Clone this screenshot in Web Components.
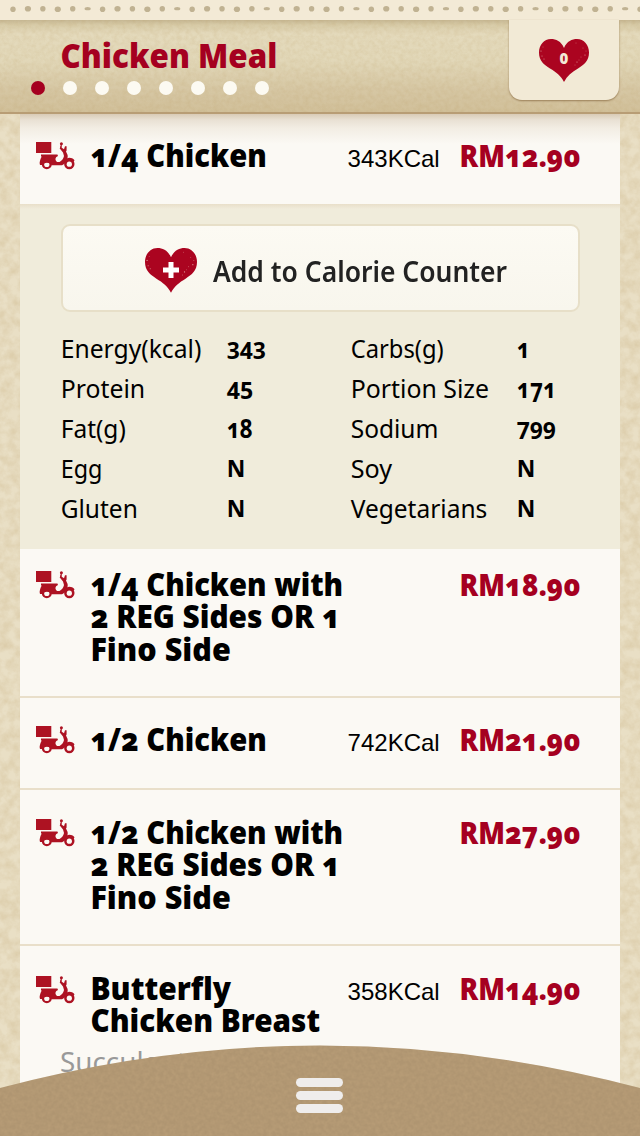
<!DOCTYPE html>
<html lang="en"><head><meta charset="utf-8"><title>Chicken Meal</title>
<style>
html,body{margin:0;height:100%;overflow:hidden}
body{font-family:"Noto Sans","Open Sans",sans-serif;font-variant-numeric:oldstyle-nums}
</style></head><body>
<meal-app></meal-app>
<script>
const define=(name,html,ready)=>customElements.define(name,class extends HTMLElement{
  connectedCallback(){
    if(this.shadowRoot)return;
    const root=this.attachShadow({mode:'open'});
    root.innerHTML=typeof html==='function'?html(this):html;
    if(ready)ready(this,root);
  }
});

/* One line of text, condensed or widened to the width of its box. */
define('fit-line',el=>`<style>
:host{display:block;width:${el.getAttribute('w')}px;white-space:nowrap}
span{display:inline-block;transform-origin:0 50%}
</style><span>${el.getAttribute('text')}</span>`,(el,root)=>{
  const s=root.querySelector('span');
  s.style.transform=`translateX(${el.getAttribute('dx')||-1}px) scaleX(${el.getAttribute('w')/s.offsetWidth})`;
});

define('paper-grain',el=>{
  const a=el.getAttribute('amount')||.9;
  const c=el.hasAttribute('light')?['.82','.7','.53']:['.7','.57','.33'];
  return `<style>
:host{display:block;position:absolute;inset:0;pointer-events:none;overflow:hidden}
svg{display:block;width:100%;height:100%}
</style><svg><filter id="g" x="0" y="0" width="100%" height="100%" color-interpolation-filters="sRGB">
<feTurbulence type="fractalNoise" baseFrequency="${el.getAttribute('freq')||'.12'}" numOctaves="4" seed="7"/>
<feColorMatrix values="0 0 0 0 ${c[0]} 0 0 0 0 ${c[1]} 0 0 0 0 ${c[2]} ${a} 0 0 0 ${-a*.3}"/>
</filter><rect width="100%" height="100%" filter="url(#g)"/></svg>`});

define('heart-icon',`<style>
:host{display:grid;width:50px;height:43px;place-items:center}
svg,.mark{grid-area:1/1}
svg{width:100%;height:100%;overflow:visible}
</style><svg viewBox="0 0 50 43" preserveAspectRatio="none">
<path fill="#ab0420" d="M25 9C22 2 17 0 12 0C5 0 0 6 0 13.500C0 22 5 25.500 11 29.500C17 33 22 37 25 43C28 37 33 33 39 29.500C45 25.500 50 22 50 13.500C50 6 45 0 38 0C33 0 28 2 25 9Z"/>
<g fill="#f3d8c9" opacity=".7"><circle cx="2" cy="12" r=".6"/><circle cx="3" cy="17" r=".5"/><circle cx="5" cy="20" r=".5"/><circle cx="4" cy="8" r=".4"/><circle cx="44" cy="9" r=".4"/><circle cx="46" cy="16" r=".6"/><circle cx="38" cy="23" r=".6"/><circle cx="40" cy="21" r=".4"/><circle cx="36" cy="26" r=".4"/><circle cx="42" cy="18" r=".4"/><circle cx="37" cy="4" r=".4"/><circle cx="47" cy="12" r=".4"/></g>
</svg><span class="mark"><slot></slot></span>`);

define('scooter-icon',`<style>:host{display:block;width:39px;height:28px}svg{display:block}</style>
<svg width="39" height="28" viewBox="0 0 39 28"><g fill="#ad1222">
<circle cx="10.800" cy="22.300" r="5"/><circle cx="33.300" cy="22" r="5.200"/></g>
<g fill="#fbf9f4"><circle cx="10.800" cy="22.500" r="2.600"/><circle cx="33.300" cy="22.200" r="2.600"/></g>
<g fill="#ad1222"><path d="M0 0H15.300V11H0Z"/>
<path d="M5 12.500H20.500C22.600 12.500 22.200 14.600 20.300 15C19 16.500 19.200 18.500 21 20H23.500C26 18.500 27.500 16.500 28 14L27 10.500L23.600 6.200L25 5.200L28 7.200L29 4.200H30.600V8.500L30 9.500L31.600 13C32.500 17 28.500 22.800 26 23.200H15.500C14 20 8 20 6.800 23H4L3.600 21C4 18 4.800 16 5.800 14.500H5Z"/>
<circle cx="25.400" cy="1.700" r="1.500"/><path d="M24.300 3.500L26 3L25.500 6L24 6Z"/>
<path d="M28 19.500C30 15.500 35 14.300 38.500 18.200L37.500 20C35 17.500 31.500 18 29 21.500Z"/></g></svg>`);

define('page-dots',`<style>
:host{display:flex;gap:18px;padding-left:31px}
i{width:14px;height:14px;border-radius:50%;background:#fcfaf2}
i:first-of-type{background:#a50020}
</style>`+'<i></i>'.repeat(8));

define('calorie-tab',`<style>
:host{position:absolute;right:21px;top:20px;width:110px;height:80px;box-sizing:border-box;padding-top:19px;display:flex;justify-content:center;background:#f2ead6;border-radius:0 0 13px 13px;box-shadow:0 1px 2px #9a7f57}
b{display:block;color:#f3ead6;font:900 15px/15px "Noto Sans",sans-serif;font-variant-numeric:lining-nums;position:relative;top:-2px}
</style><heart-icon><b>0</b></heart-icon>`);

define('meal-header',`<style>
:host{display:block;height:114px;position:relative;z-index:2;box-sizing:border-box;border-bottom:2px solid #b89d75;background:linear-gradient(#c6b793 20px,#d8cca9 25px,#e4dabc 34px,#e2d8b9 60px,#d6c7a4 90px,#d1c09a 112px)}
.strip{height:20px;background:#f3ead6;position:relative}
.strip svg{display:block;position:relative}
.body{position:relative}
fit-line{padding:12px 0 0 61px;color:#a50020;font-weight:900;font-size:33.500px;line-height:46px}
page-dots{margin-top:3px}
</style><paper-grain freq=".22" amount=".25"></paper-grain>
<div class="strip"><svg width="640" height="20" fill="#c0b292"></svg></div>
<div class="body"><fit-line dx="-.5" w="217" text="Chicken Meal"></fit-line><page-dots></page-dots></div>
<calorie-tab></calorie-tab>`,(el,root)=>{
  let s='';
  for(let i=0;i<43;i++)s+=`<ellipse cx="${13+i*14.93}" cy="${i%3?8.700:9.200}" rx="${2.700+i%2*.4}" ry="${i%6===5?1.600:2.800}"/>`;
  root.querySelector('svg').innerHTML=s;
});

define('meal-row',el=>`<style>
:host{display:grid;grid-template-columns:55px 1fr auto;box-sizing:border-box;height:${el.getAttribute('h')}px;padding:${el.getAttribute('top')||24.7}px 40px 0 16px;border-bottom:${el.hasAttribute('plain')?0:2}px solid #e9dfca;position:relative;align-items:start}
scooter-icon{margin-top:3.800px}
.name{font-weight:900;font-size:31px;line-height:32.400px;color:#000}
.right{display:flex;align-items:flex-start}
.cal{font:24px/32px "Liberation Sans",sans-serif;font-variant-numeric:normal;padding-top:4px;color:#000;margin-right:20px}
.price{font-weight:900;font-size:29.500px;line-height:32.400px;color:#a50020;padding-top:1.200px}
</style><scooter-icon></scooter-icon><div class="name">${el.getAttribute('lines').split('|').map(l=>{const [t,w]=l.split('~');return `<fit-line dx="-.6" w="${w}" text="${t}"></fit-line>`}).join('')}</div>
<div class="right">${el.hasAttribute('cal')?`<fit-line class="cal" dx="0.6" w="92" text="${el.getAttribute('cal')}KCal"></fit-line>`:''}<fit-line class="price" dx="0.6" w="121" text="RM${el.getAttribute('price')}"></fit-line></div>`);

define('calorie-button',`<style>
:host{display:flex;box-sizing:border-box;width:519px;height:88px;border:2px solid #e7dfc8;border-radius:9px;background:linear-gradient(#fcfaf3,#f8f6ed);padding:22px 0 0 82px;gap:16px;align-items:flex-start}
heart-icon{width:52px;height:43px}
svg{display:block}
fit-line{font-weight:600;font-size:28px;line-height:44px;color:#222;margin-top:.5px}
</style><heart-icon><svg width="16" height="18" fill="#fff"><path d="M5.500 1h5v5.500H16v5h-5.500V17h-5v-5.500H0v-5h5.500z"/></svg></heart-icon>
<fit-line dx="0" w="294" text="Add to Calorie Counter"></fit-line>`);

/* Figures made of 3, 4, 5, 7 and 9 only use tall numerals, dropped a little below the baseline. */
define('nutrition-fact',el=>`<style>
:host{display:grid;grid-template-columns:166px auto;height:40px;line-height:40px;color:#000;font-size:24.500px}
.v{font-weight:700;font-size:24px;position:relative;top:-.5px}
.low{font-variant-numeric:lining-nums;top:1.500px}
.small{font-size:26px}
</style><fit-line dx="-.3" w="${el.getAttribute('w')}" text="${el.getAttribute('label')}"></fit-line><fit-line dx="-.3" class="v ${/^[34579]+$/.test(el.getAttribute('value'))?'low':/1/.test(el.getAttribute('value'))?'small':''}" w="${el.getAttribute('vw')}" text="${el.getAttribute('value')}"></fit-line>`);

define('nutrition-panel',`<style>
:host{display:block;height:345px;box-sizing:border-box;padding:20px 0 0 41px;background:linear-gradient(#e9dfca,#f0ecdb 5px);position:relative}
.facts{display:grid;grid-template-columns:290px 1fr;padding-top:16.500px}
calorie-button{position:relative;left:-.5px}
</style><calorie-button></calorie-button><div class="facts"></div>`,(el,root)=>{
  const f=[['Energy(kcal)',141,'343',39],['Carbs(g)',93,'1',13],['Protein',84,'45',26],['Portion Size',138,'171',39],['Fat(g)',65,'18',26],['Sodium',88,'799',39],['Egg',42,'N',19],['Soy',41,'N',19],['Gluten',77,'N',19],['Vegetarians',137,'N',19]];
  root.querySelector('.facts').innerHTML=f.map(([l,w,v,vw])=>`<nutrition-fact label="${l}" w="${w}" value="${v}" vw="${vw}"></nutrition-fact>`).join('');
});

define('bottom-menu',`<style>
:host{position:absolute;left:0;right:0;bottom:0;height:91px;z-index:3;clip-path:path('M0 43Q320 -42 640 43V91H0Z');background:#af9571}
.bars{position:relative;display:flex;flex-direction:column;align-items:center;gap:4px;padding:33px 1px 0 0}
i{width:47px;height:9px;border-radius:4.500px;background:#efedec;position:relative;overflow:hidden}
</style><paper-grain light freq=".25" amount=".45"></paper-grain><div class="bars"><i></i><i></i><i></i></div>`);

define('meal-app',`<style>
:host{display:block;position:relative;width:640px;height:1136px;overflow:hidden;background:#e9dfc5}
main{position:relative;margin:0 20px;background:#fbf9f4;height:1022px}
main::before{content:"";position:absolute;inset:0 0 auto;height:30px;background:linear-gradient(#d9cbb6,#e9e1d4 6px,#f2ede3 14px,#fbf9f4)}
.desc{position:relative;padding:6px 0 0 41px;font-size:26.500px;line-height:40px;color:#999}
</style><paper-grain freq=".1" amount=".4"></paper-grain><meal-header></meal-header>
<main>
<meal-row plain h="90" lines="1/4 Chicken~176" cal="343" price="12.90"></meal-row>
<nutrition-panel></nutrition-panel>
<meal-row h="149" top="18.700" lines="1/4 Chicken with~253|2 REG Sides OR 1~250|Fino Side~140" price="18.90"></meal-row>
<meal-row h="92" lines="1/2 Chicken~176" cal="742" price="21.90"></meal-row>
<meal-row h="156" top="25.700" lines="1/2 Chicken with~253|2 REG Sides OR 1~250|Fino Side~140" price="27.90"></meal-row>
<meal-row plain h="90" top="26" lines="Butterfly~141|Chicken Breast~230" cal="358" price="14.90"></meal-row>
<div class="desc"><fit-line w="126" text="Succulent"></fit-line></div>
</main><bottom-menu></bottom-menu>`);
</script></body></html>
